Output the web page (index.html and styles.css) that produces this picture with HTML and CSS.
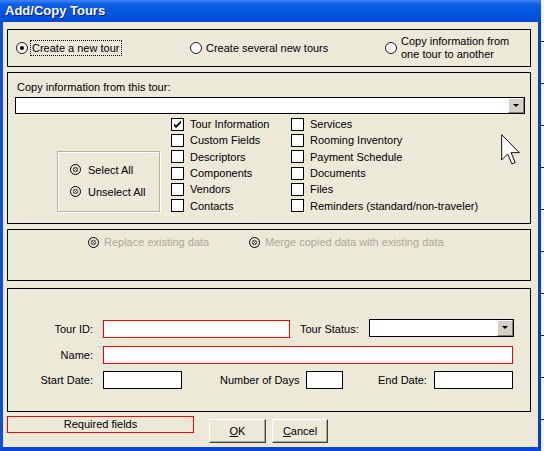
FILE: index.html
```html
<!DOCTYPE html>
<html>
<head>
  <meta charset="UTF-8" />
  <title>Add/Copy Tours</title>
  <link rel="stylesheet" href="styles.css">
</head>
<body>
  <div class="window">
    <div class="titlebar">Add/Copy Tours</div>
    <div class="content">

      <div class="group mode-group">
        <div class="radio-item">
          <span class="radio checked"></span>
          <span class="caption focus">Create a new tour</span>
        </div>
        <div class="radio-item">
          <span class="radio"></span>
          <span class="caption">Create several new tours</span>
        </div>
        <div class="radio-item">
          <span class="radio"></span>
          <span class="caption">Copy information from<br>one tour to another</span>
        </div>
      </div>

      <div class="group copy-group">
        <div class="copy-label">Copy information from this tour:</div>
        <div class="combo copy-combo"><span class="combo-btn"></span></div>
        <div class="copy-options">
          <div class="select-box">
            <div class="select-item">
              <svg class="dim-radio" width="11" height="11" viewBox="0 0 11 11"><circle cx="5.5" cy="5.5" r="5" fill="none" stroke="#000"/><circle cx="5.5" cy="5.5" r="2.3" fill="none" stroke="#555"/><path d="M4.2 4.2l2.6 2.6M6.8 4.2l-2.6 2.6" stroke="#555"/></svg>
              Select All
            </div>
            <div class="select-item">
              <svg class="dim-radio" width="11" height="11" viewBox="0 0 11 11"><circle cx="5.5" cy="5.5" r="5" fill="none" stroke="#000"/><circle cx="5.5" cy="5.5" r="2.3" fill="none" stroke="#555"/><path d="M4.2 4.2l2.6 2.6M6.8 4.2l-2.6 2.6" stroke="#555"/></svg>
              Unselect All
            </div>
          </div>
          <div class="check-col col-one">
            <div class="check-row"><span class="check"><svg width="11" height="11" viewBox="0 0 11 11"><path d="M2 4.5l2 2 5-5v2.5l-5 5-2-2z" fill="#000"/></svg></span>Tour Information</div>
            <div class="check-row"><span class="check"></span>Custom Fields</div>
            <div class="check-row"><span class="check"></span>Descriptors</div>
            <div class="check-row"><span class="check"></span>Components</div>
            <div class="check-row"><span class="check"></span>Vendors</div>
            <div class="check-row"><span class="check"></span>Contacts</div>
          </div>
          <div class="check-col">
            <div class="check-row"><span class="check"></span>Services</div>
            <div class="check-row"><span class="check"></span>Rooming Inventory</div>
            <div class="check-row"><span class="check"></span>Payment Schedule</div>
            <div class="check-row"><span class="check"></span>Documents</div>
            <div class="check-row"><span class="check"></span>Files</div>
            <div class="check-row"><span class="check"></span>Reminders (standard/non-traveler)</div>
          </div>
        </div>
      </div>

      <div class="group replace-group">
        <div class="replace-item replace-first">
          <svg class="dim-radio" width="11" height="11" viewBox="0 0 11 11"><circle cx="5.5" cy="5.5" r="5" fill="none" stroke="#000"/><circle cx="5.5" cy="5.5" r="2.3" fill="none" stroke="#555"/><path d="M4.2 4.2l2.6 2.6M6.8 4.2l-2.6 2.6" stroke="#555"/></svg>
          Replace existing data
        </div>
        <div class="replace-item">
          <svg class="dim-radio" width="11" height="11" viewBox="0 0 11 11"><circle cx="5.5" cy="5.5" r="5" fill="none" stroke="#000"/><circle cx="5.5" cy="5.5" r="2.3" fill="none" stroke="#555"/><path d="M4.2 4.2l2.6 2.6M6.8 4.2l-2.6 2.6" stroke="#555"/></svg>
          Merge copied data with existing data
        </div>
      </div>

      <div class="group form-group">
        <div class="form-row">
          <span class="field-label">Tour ID:</span>
          <span class="field required tour-id"></span>
          <span class="inline-label status-label">Tour Status:</span>
          <div class="combo status-combo"><span class="combo-btn"></span></div>
        </div>
        <div class="form-row row-name">
          <span class="field-label">Name:</span>
          <span class="field required name-field"></span>
        </div>
        <div class="form-row row-dates">
          <span class="field-label">Start Date:</span>
          <span class="field date-field"></span>
          <span class="inline-label days-label">Number of Days</span>
          <span class="field days-field"></span>
          <span class="inline-label end-label">End Date:</span>
          <span class="field date-field"></span>
        </div>
      </div>

      <div class="footer">
        <div class="required-note">Required fields</div>
        <button class="btn ok-btn"><u>O</u>K</button>
        <button class="btn cancel-btn"><u>C</u>ancel</button>
      </div>
    </div>
  </div>

  <svg class="cursor" width="19" height="31" viewBox="0 0 12 19.6"><path d="M0.4 0.4V16.4L4.2 12.6L6.9 18.9L9 18L6.4 11.8H11.6Z" fill="#fff" stroke="#000" stroke-width="0.6"/></svg>
</body>
</html>
```

FILE: styles.css
```css
* {
  box-sizing: border-box;
}
body {
  margin: 0;
  width: 544px;
  height: 451px;
  overflow: hidden;
  font-family: "Liberation Sans", Arial, sans-serif;
  font-size: 11px;
  color: #000;
  background: #f2f2f2 repeating-linear-gradient(#f2f2f2 0, #f2f2f2 41px, #222 41px, #222 42px);
  position: relative;
}
.window {
  width: 541px;
  height: 451px;
  display: flex;
  flex-direction: column;
  border-left: 3px solid #0b4fe0;
  border-right: 3px solid #0a3cc4;
  border-bottom: 4px solid #0a45d6;
  background: #ece9d8;
}
.titlebar {
  height: 22px;
  margin-left: -3px;
  margin-right: -3px;
  padding-left: 5px;
  line-height: 22px;
  font-size: 13px;
  font-weight: bold;
  color: #fff;
  text-shadow: 1px 1px #0a1a8a;
  background: linear-gradient(#3d86f5 0, #0d5fe6 4px, #0456e2 12px, #0250da 18px, #0347cc 22px);
}
.content {
  flex: 1;
  padding-left: 4px;
}
.group {
  width: 524px;
  border: 1px solid #000;
}

/* mode radios */
.mode-group {
  margin-top: 7px;
  height: 38px;
  padding-left: 8px;
  display: grid;
  grid-template-columns: 174px 195px 1fr;
  align-items: center;
}
.radio-item {
  display: flex;
  align-items: center;
}
.radio {
  width: 12px;
  height: 12px;
  border: 1px solid #1a1a1a;
  border-radius: 50%;
  background: #fff;
  margin-right: 2px;
  flex: none;
  display: flex;
  align-items: center;
  justify-content: center;
}
.radio.checked::after {
  content: "";
  width: 4px;
  height: 4px;
  border-radius: 50%;
  background: #000;
}
.caption {
  line-height: 13px;
  padding: 1px 2px 1px 1px;
  border: 1px dotted transparent;
}
.caption.focus {
  border-color: #000;
  line-height: 14px;
  padding: 0 2px 0 1px;
}

/* copy from */
.copy-group {
  margin-top: 5px;
  height: 152px;
  padding: 7px 0 0 7px;
}
.copy-label {
  margin-left: 2px;
  line-height: 14px;
}
.combo {
  position: relative;
  background: #fff;
  border: 1px solid #000;
}
.copy-combo {
  margin-top: 3px;
  width: 510px;
  height: 17px;
}
.combo-btn {
  position: absolute;
  right: 0;
  top: 0;
  bottom: 0;
  width: 16px;
  background: #d4d0c8;
  border-top: 1px solid #fff;
  border-left: 1px solid #fff;
  border-right: 1px solid #808080;
  border-bottom: 1px solid #808080;
}
.combo-btn::after {
  content: "";
  position: absolute;
  left: 4px;
  top: 5px;
  border-left: 3px solid transparent;
  border-right: 3px solid transparent;
  border-top: 3px solid #000;
}
.copy-options {
  margin-top: 2px;
  display: flex;
  align-items: flex-end;
}
.select-box {
  margin-left: 42px;
  margin-bottom: 2px;
  width: 103px;
  height: 61px;
  border: 1px solid #b5b2a6;
  box-shadow: inset 1px 1px #fff, 1px 1px #fff;
  padding: 11px 0 0 12px;
}
.select-item {
  display: flex;
  align-items: center;
  line-height: 14px;
  height: 14px;
}
.select-item + .select-item {
  margin-top: 8px;
}
.dim-radio {
  flex: none;
  margin-right: 7px;
}
.check-col {
  width: 200px;
}
.col-one {
  margin-left: 11px;
  width: 120px;
}
.check-row {
  height: 16.3px;
  display: flex;
  align-items: center;
}
.check {
  width: 13px;
  height: 13px;
  border: 1px solid #000;
  background: #fff;
  margin-right: 6px;
  flex: none;
  display: flex;
  align-items: center;
  justify-content: center;
}

/* replace / merge */
.replace-group {
  margin-top: 5px;
  height: 52px;
  padding: 5px 0 0 80px;
  display: flex;
  align-items: flex-start;
  color: #aca899;
}
.replace-item {
  display: flex;
  align-items: center;
  line-height: 14px;
}
.replace-item .dim-radio {
  margin-right: 5px;
}
.replace-first {
  width: 161px;
}

/* tour fields */
.form-group {
  margin-top: 7px;
  height: 124px;
  padding-top: 31px;
}
.form-row {
  display: flex;
  align-items: center;
  height: 18px;
}
.row-name {
  margin-top: 8px;
}
.row-dates {
  margin-top: 7px;
}
.field-label {
  width: 85px;
  text-align: right;
  margin-right: 10px;
}
.field {
  height: 18px;
  background: #fff;
  border: 1px solid #000;
}
.field.required {
  border-color: #f00;
}
.tour-id {
  width: 187px;
}
.inline-label {
  flex: none;
}
.status-label {
  margin-left: 10px;
  width: 69px;
}
.status-combo {
  width: 145px;
  height: 18px;
  margin-top: -2px;
}
.name-field {
  width: 410px;
}
.date-field {
  width: 79px;
}
.days-label {
  margin-left: 38px;
  width: 86px;
}
.days-field {
  width: 37px;
}
.end-label {
  margin-left: 35px;
  width: 56px;
}

/* bottom bar */
.footer {
  display: flex;
  align-items: flex-start;
  margin-top: 4px;
}
.required-note {
  width: 187px;
  height: 17px;
  border: 1px solid #f00;
  text-align: center;
  line-height: 15px;
}
.btn {
  margin-top: 3px;
  height: 24px;
  padding: 0;
  font-family: "Liberation Sans", Arial, sans-serif;
  font-size: 11px;
  color: #000;
  background: #ece9d8;
  border-top: 1px solid #fff;
  border-left: 1px solid #fff;
  border-right: 1px solid #404040;
  border-bottom: 1px solid #404040;
  box-shadow: inset -1px -1px #aca899;
}
.ok-btn {
  margin-left: 15px;
  width: 57px;
}
.cancel-btn {
  margin-left: 6px;
  width: 56px;
}
.cursor {
  position: absolute;
  left: 501px;
  top: 134px;
}
```
